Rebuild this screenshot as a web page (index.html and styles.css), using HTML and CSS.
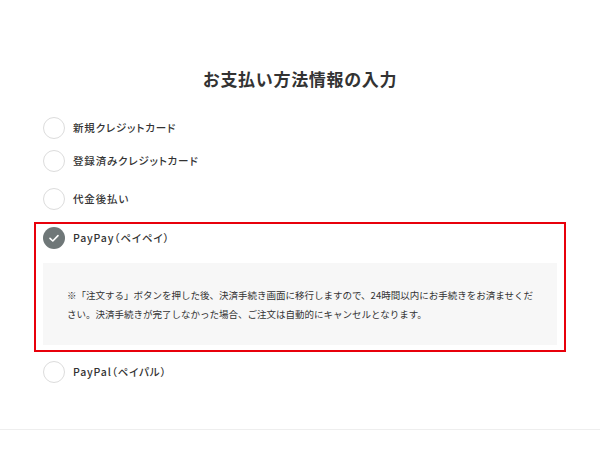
FILE: index.html
```html
<!DOCTYPE html>
<html lang="ja">
<head>
<meta charset="utf-8">
<title>お支払い方法情報の入力</title>
<link rel="stylesheet" href="styles.css">
</head>
<body>
<main class="page">
  <h1 class="title">お支払い方法情報の入力</h1>
  <div class="options">
    <label class="option opt-1">
      <span class="radio"></span>
      <span class="label">新規クレジットカード</span>
    </label>
    <label class="option opt-2">
      <span class="radio"></span>
      <span class="label">登録済みクレジットカード</span>
    </label>
    <label class="option opt-3">
      <span class="radio"></span>
      <span class="label">代金後払い</span>
    </label>
    <div class="option option-selected opt-4">
      <div class="option-head">
        <span class="radio radio-checked">
          <svg viewBox="0 0 22 22" width="22" height="22" aria-hidden="true">
            <path d="M7 11.3 L9.8 14 L15 8.6" fill="none" stroke="#fff" stroke-width="1.6" stroke-linecap="round" stroke-linejoin="round"/>
          </svg>
        </span>
        <span class="label">PayPay（ペイペイ）</span>
      </div>
      <div class="note">
        <p>※「注文する」ボタンを押した後、決済手続き画面に移行しますので、24時間以内にお手続きをお済ませください。決済手続きが完了しなかった場合、ご注文は自動的にキャンセルとなります。</p>
      </div>
    </div>
    <label class="option opt-5">
      <span class="radio"></span>
      <span class="label">PayPal（ペイパル）</span>
    </label>
  </div>
  <div class="footer-line"></div>
</main>
</body>
</html>
```
FILE: styles.css
```css
html, body {
  margin: 0;
  padding: 0;
  background: #fff;
}
body {
  font-family: "Noto Sans CJK JP", "Noto Sans", sans-serif;
  color: #333;
}
.page {
  width: 600px;
  padding-top: 67px;
}
.title {
  margin: 0;
  font-size: 17px;
  line-height: 24px;
  font-weight: 700;
  text-align: center;
  letter-spacing: 0.04em;
  color: #333;
}
.options {
  margin-top: 21px;
  padding: 0 34px;
  display: flex;
  flex-direction: column;
}
.option {
  display: flex;
  align-items: center;
  gap: 8px;
  padding: 3px 7px;
  border: 2px solid transparent;
}
.opt-2 { margin-top: 1px; }
.opt-3 { margin-top: 6px; }
.opt-4 { margin-top: 7px; }
.opt-5 { margin-top: 4px; }
.option-selected {
  display: block;
  border-color: #e8000b;
  padding: 3px 7px 5px 7px;
}
.option-head {
  display: flex;
  align-items: center;
  gap: 8px;
}
.radio {
  flex: none;
  width: 22px;
  height: 22px;
  box-sizing: border-box;
  border: 1px solid #dcdcdc;
  border-radius: 50%;
  background: #fff;
}
.radio-checked {
  border: none;
  background: #6f7778;
  display: block;
}
.radio-checked svg {
  display: block;
}
.label {
  font-size: 10.5px;
  line-height: 22px;
  font-weight: 500;
  letter-spacing: 0.08em;
  font-feature-settings: "palt";
  color: #333;
}
.note {
  margin-top: 14px;
  background: #f7f7f7;
  padding: 23px 24px 21px 24px;
}
.note p {
  margin: 0;
  font-size: 9.5px;
  line-height: 19px;
  color: #333;
}
.footer-line {
  margin-top: 41px;
  border-top: 1px solid #eeeeee;
}
```
